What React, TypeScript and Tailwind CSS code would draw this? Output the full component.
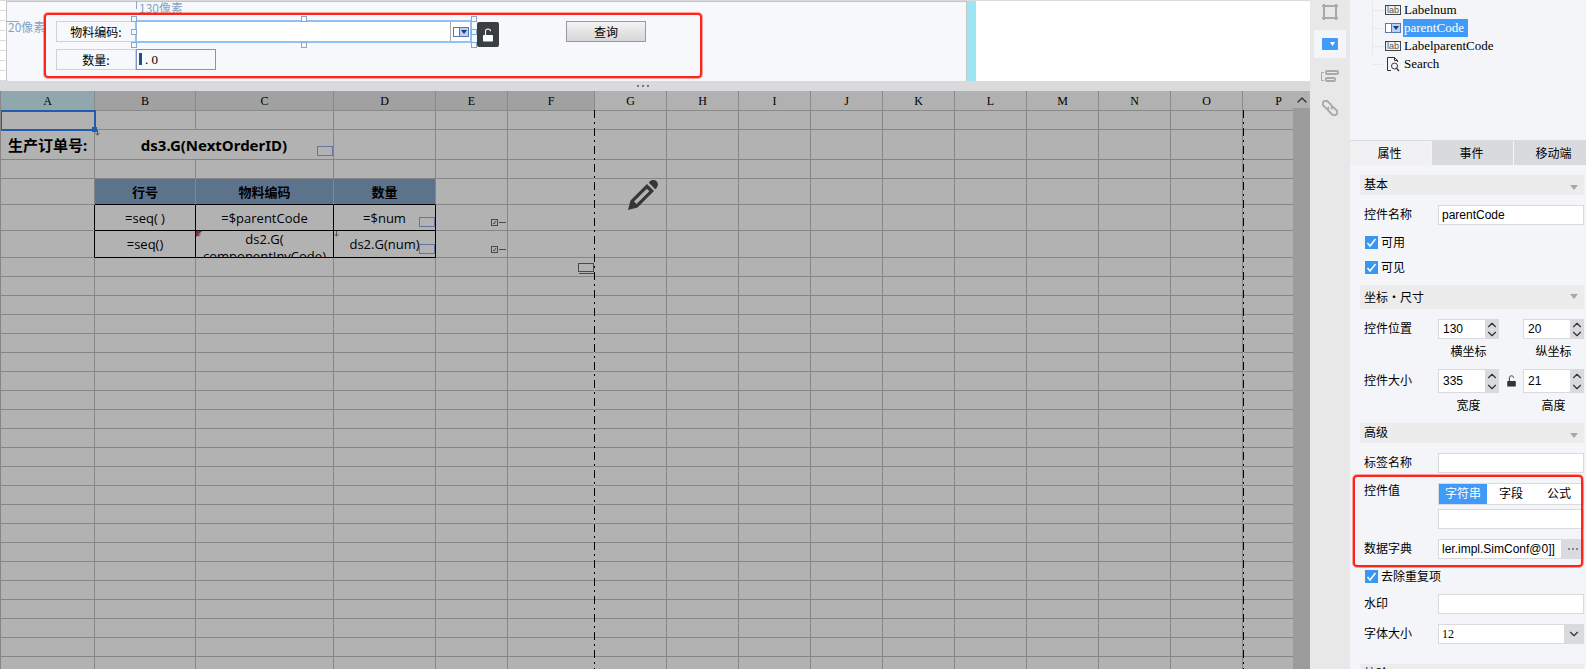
import React from "react";
import { ChevronDown, ChevronUp } from "lucide-react";

const columns = [
  { name: "A", width: 94 },
  { name: "B", width: 101 },
  { name: "C", width: 138 },
  { name: "D", width: 102 },
  { name: "E", width: 72 },
  { name: "F", width: 87 },
  ...["G", "H", "I", "J", "K", "L", "M", "N", "O", "P"].map((name) => ({ name, width: 72 })),
];

const emptyRows = Array.from({ length: 36 }, (_, i) => i);

const line = "border-r border-b border-[#868686]";
const boxed = "border-r border-b border-black relative";
const headCell = "border-r border-b border-r-[#868686] border-b-black bg-[#5d738c]";

const LockIcon = ({ className }: { className: string }) => (
  <svg viewBox="0 0 10 14" className={className} fill="none">
    <path d="M2.5 7V3.5C2.5 1.8 3.5 1 5 1s2.5.8 2.5 2.3" stroke="currentColor" strokeWidth="1.1" />
    <rect x="0" y="7" width="10" height="6.5" rx="0.8" fill="currentColor" />
  </svg>
);

const ComboIcon = () => (
  <svg width="16" height="10" viewBox="0 0 16 10" className="shrink-0">
    <rect x="0.5" y="0.5" width="15" height="9" fill="#fff" stroke="#5a78a8" />
    <rect x="7" y="1" width="8" height="8" fill="#b9d0f2" />
    <path d="M6.5 1v8" stroke="#5a78a8" />
    <path d="M8 3h6L11 7z" fill="#1d3b80" />
  </svg>
);

const LabIcon = () => (
  <svg width="16" height="10" viewBox="0 0 16 10" className="shrink-0">
    <rect x="0.5" y="0.5" width="15" height="9" fill="#f4f4f4" stroke="#444" />
    <text x="8" y="8" fontSize="9" textAnchor="middle" fill="#555" fontFamily="Liberation Sans">
      lab
    </text>
  </svg>
);

const SearchFileIcon = () => (
  <svg width="14" height="15" viewBox="0 0 14 15" fill="none" stroke="#333" className="ml-0.5 shrink-0">
    <path d="M4 13.5H.5V.5h7l3 3V5M7.5.5v3h3" />
    <circle cx="7.5" cy="9" r="3" />
    <path d="M9.5 11.2l2.5 2.8" strokeWidth="1.3" />
  </svg>
);

// marks a cell that has a widget bound to it
const WidgetMark = () => (
  <span className="absolute bottom-[3px] right-0 h-2.5 w-4 border border-[#65759c]" />
);

const ExpandArrow = () => (
  <svg width="5" height="6" viewBox="0 0 5 6" className="absolute left-0 top-0">
    <path d="M2.5 0v5M.3 2.8l2.2 2.4 2.2-2.4" stroke="#555" fill="none" />
  </svg>
);

const CheckMark = () => (
  <svg
    width="16"
    height="8"
    viewBox="0 0 16 8"
    className="absolute bottom-[3px] right-0"
    fill="none"
    stroke="#4a4a4a"
  >
    <rect x="0.5" y="0.5" width="6" height="6" />
    <path d="M2 4l1 1 2-3M8 3.5h7" />
  </svg>
);

const Handle = ({ className }: { className: string }) => (
  <span className={`absolute size-[6px] border border-[#8aa9c8] bg-[#f7f8fb] ${className}`} />
);

const FormDesigner: React.FC = () => (
  <div className="flex h-[81px] shrink-0 overflow-hidden border-t border-[#dadadc] bg-white">
    <div className="w-1.5 shrink-0 bg-[repeating-linear-gradient(to_bottom,#fff_0px,#fff_9px,#dcdcdc_9px,#dcdcdc_10px)]" />
    {/* form body: widgets are placed freely */}
    <div className="relative w-[961px] shrink-0 border border-b-0 border-[#c5c6c8] bg-[#f7f8fb] font-['Noto_Sans_CJK_SC',sans-serif] text-xs">
      <span className="absolute -top-px left-[129px] h-2 w-px bg-[#8aa9c8]" />
      <span className="absolute -top-px left-[132px] leading-[14px] text-[#86a5c5]">130像素</span>
      <span className="absolute left-0 top-[19px] h-px w-3 bg-[#8aa9c8]" />
      <span className="absolute left-[1px] top-[18px] leading-[14px] text-[#86a5c5]">20像素</span>

      <label
        htmlFor="f-code"
        className="absolute left-[49px] top-[19px] flex h-[21px] w-20 items-center justify-center border border-[#d0d1d4]"
      >
        物料编码:
      </label>
      <div className="absolute left-[128px] top-[18px] flex h-[23px] w-[337px] border-2 border-[#8fc1f7] bg-white">
        <input id="f-code" className="min-w-0 flex-1 outline-none" />
        <button aria-label="展开" className="flex w-5 items-center justify-center border-l border-[#aaa]">
          <ComboIcon />
        </button>
      </div>
      <Handle className="left-[124px] top-[14px]" />
      <Handle className="left-[124px] top-[27px]" />
      <Handle className="left-[124px] top-[40px]" />
      <Handle className="left-[294px] top-[14px]" />
      <Handle className="left-[294px] top-[40px]" />
      <Handle className="left-[464px] top-[14px]" />
      <Handle className="left-[464px] top-[27px]" />
      <Handle className="left-[464px] top-[40px]" />
      <button
        aria-label="锁定"
        className="absolute left-[470px] top-[20px] flex h-[25px] w-[22px] items-center justify-center rounded-xs bg-[#3a3f44] text-white"
      >
        <LockIcon className="h-3.5 w-2.5" />
      </button>

      <label
        htmlFor="f-num"
        className="absolute left-[49px] top-[47px] flex h-[21px] w-20 items-center justify-center border border-[#d0d1d4]"
      >
        数量:
      </label>
      <input
        id="f-num"
        defaultValue=". 0"
        className="absolute left-[129px] top-[47px] h-[21px] w-20 border border-[#7f97bb] pl-2 font-['Liberation_Serif',serif] text-[13px] outline-none"
      />
      <span className="absolute left-[132px] top-[51px] h-3 w-[3px] bg-[#1d4f86]" />

      <button className="absolute left-[559px] top-[19px] h-[21px] w-20 border border-[#9a9a9c] bg-linear-to-b from-[#f3f3f3] to-[#d6d6d6] leading-[18px]">
        查询
      </button>

      <div className="absolute left-[37px] top-[11px] h-[65px] w-[658px] rounded-sm border-2 border-[#ff2419] ring-1 ring-[#ff2419]/40" />
    </div>
    <div className="w-[9px] shrink-0 bg-[#9be5f5]" />
  </div>
);

const EmptyCells = ({ from, to = columns.length }: { from: number; to?: number }) => (
  <>
    {columns.slice(from, to).map((c) => (
      <td key={c.name} className={line} />
    ))}
  </>
);

const PageBreak = ({ className }: { className: string }) => (
  <div
    className={`absolute bottom-0 top-[19px] w-px bg-[repeating-linear-gradient(to_bottom,#000_0px,#000_8px,#b2b2b2_8px,#b2b2b2_12px,#000_12px,#000_14px,#b2b2b2_14px,#b2b2b2_18px)] ${className}`}
  />
);

const ReportGrid: React.FC = () => (
  <div className="flex min-h-0 flex-1">
    <div className="relative min-w-0 flex-1 overflow-hidden border-l border-[#868686] bg-[#b2b2b2]">
      <table className="w-[1314px] table-fixed border-separate border-spacing-0 text-center font-['Open_Sans','Noto_Sans_CJK_SC',sans-serif] text-[13px] leading-[18px] text-black [&_td]:p-0">
        <colgroup>
          {columns.map((c) => (
            <col key={c.name} style={{ width: c.width }} />
          ))}
        </colgroup>
        <thead>
          <tr className="h-5 font-['Liberation_Serif',serif] text-xs">
            {columns.map((c, i) => (
              <th
                key={c.name}
                className={`border-r border-b border-[#8a8a8a] p-0 pt-px font-normal ${
                  i === 0 ? "bg-[#91a7ae]" : i < 6 ? "bg-[#a1a1a1]" : "bg-[#b1b1b1]"
                }`}
              >
                {c.name}
              </th>
            ))}
          </tr>
        </thead>
        <tbody>
          <tr className="h-[19px]">
            <td className={`${line} relative`}>
              <div className="absolute -left-px -right-0.5 -top-px -bottom-0.5 border-2 border-[#225cae]" />
              <div className="absolute -bottom-[3px] -right-[3px] size-[5px] bg-[#225cae]" />
            </td>
            <EmptyCells from={1} />
          </tr>
          <tr className="h-[30px] font-['Noto_Sans','Noto_Sans_CJK_SC',sans-serif] text-[15px] font-bold">
            <td className={`${line} whitespace-nowrap`}>生产订单号:</td>
            <td colSpan={2} className={`${line} relative`}>
              <ExpandArrow />
              ds3.G(NextOrderID)
              <WidgetMark />
            </td>
            <EmptyCells from={3} />
          </tr>
          <tr className="h-[19px]">
            <EmptyCells from={0} />
          </tr>
          <tr className="h-[26px] font-bold">
            <td className={line} />
            <td className={headCell}>行号</td>
            <td className={headCell}>物料编码</td>
            <td className={headCell}>数量</td>
            <EmptyCells from={4} />
          </tr>
          <tr className="h-[26px]">
            <td className="border-r border-b border-r-black border-b-[#868686]" />
            <td className={boxed}>=seq( )</td>
            <td className={boxed}>=$parentCode</td>
            <td className={boxed}>
              =$num
              <WidgetMark />
            </td>
            <td className={`${line} relative`}>
              <CheckMark />
            </td>
            <EmptyCells from={5} />
          </tr>
          <tr className="h-[27px]">
            <td className="border-r border-b border-r-black border-b-[#868686]" />
            <td className={boxed}>=seq()</td>
            <td className={boxed}>
              <span className="absolute left-0 top-0 size-[6px] bg-[#c00a2c] [clip-path:polygon(0_0,100%_0,0_100%)]" />
              <ExpandArrow />
              <div className="h-[26px] overflow-hidden leading-[17px]">
                ds2.G(
                <br />
                componentInvCode)
              </div>
            </td>
            <td className={boxed}>
              <ExpandArrow />
              ds2.G(num)
              <WidgetMark />
            </td>
            <td className={`${line} relative`}>
              <CheckMark />
            </td>
            <EmptyCells from={5} />
          </tr>
          <tr className="h-[19px]">
            <EmptyCells from={0} to={5} />
            <td className={`${line} relative`}>
              <span className="absolute right-0 top-[5px] h-[9px] w-4 border border-[#4a4a4a]" />
              <span className="absolute right-0 top-[15px] h-px w-[15px] bg-[#4a4a4a]" />
            </td>
            <EmptyCells from={6} />
          </tr>
          {emptyRows.map((row) => (
            <tr key={row} className="h-[19px]">
              <EmptyCells from={0} />
            </tr>
          ))}
        </tbody>
      </table>
      <PageBreak className="left-[593px]" />
      <PageBreak className="left-[1242px]" />
      <svg
        width="30"
        height="30"
        viewBox="0 0 30 30"
        className="absolute left-[627px] top-[89px]"
        fill="#363636"
      >
        <path d="M20.7 2.6l1.3-1.3a4.5 4.5 0 0 1 6.5 0 4.600 4.600 0 0 1 0 6.600l-1.300 1.300z" />
        <path fillRule="evenodd" d="M19 4l7 7L9.500 27.500 0 30l2.500-9.500zM18.800 8.800L6 21.500l2.500 2.500L21.300 11.300z" />
      </svg>
    </div>
    <div className="w-[17px] shrink-0 bg-[#9b9b9b]">
      <button aria-label="向上滚动" className="flex h-[17px] w-full items-center justify-center bg-[#b1b1b1]">
        <ChevronUp className="size-4 text-[#333]" strokeWidth={2} />
      </button>
    </div>
  </div>
);

const ToolRail: React.FC = () => (
  <nav className="flex w-10 shrink-0 flex-col items-center overflow-hidden bg-[#e8e8e8] text-[#a9a9a9]">
    <div className="-mt-0.5 flex flex-col gap-1">
      <button aria-label="边框" className="flex h-7 w-8 items-center justify-center">
        <svg width="16" height="16" viewBox="0 0 16 16" fill="none" stroke="currentColor" strokeWidth="2">
          <path d="M2 2h12v12H2z" />
          <path d="M0 2h3M2 0v3M13 2h3M14 0v3M0 14h3M2 13v3M13 14h3M14 13v3" />
        </svg>
      </button>
      <button aria-label="控件设置" className="flex h-7 w-8 items-center justify-center bg-[#f4f5f8]">
        <svg width="16" height="12" viewBox="0 0 16 12">
          <rect width="16" height="12" rx="1" fill="#409bf8" />
          <path d="M8 4h5l-2.5 4z" fill="#fff" />
        </svg>
      </button>
      <button aria-label="布局" className="flex h-7 w-8 items-center justify-center">
        <svg width="18" height="13" viewBox="0 0 18 13" fill="none" stroke="currentColor">
          <path d="M3 2.5H.5v8H3" />
          <rect x="5" y="1" width="12" height="3" rx="1" strokeWidth="2" />
          <rect x="5" y="8" width="9" height="3" rx="1" strokeWidth="2" />
        </svg>
      </button>
      <button aria-label="超级链接" className="flex h-7 w-8 items-center justify-center">
        <svg width="16" height="16" viewBox="0 0 16 16" fill="none" stroke="currentColor" strokeWidth="2">
          <g transform="rotate(45 8 8)">
            <path d="M7 11H2a3 3 0 0 1 0-6h4.500a3 3 0 0 1 3 3" />
            <path d="M9 5h5a3 3 0 0 1 0 6H9.500a3 3 0 0 1-3-3" />
          </g>
        </svg>
      </button>
    </div>
  </nav>
);

const treeItems = [
  { name: "Labelnum", icon: <LabIcon />, selected: false },
  { name: "parentCode", icon: <ComboIcon />, selected: true },
  { name: "LabelparentCode", icon: <LabIcon />, selected: false },
  { name: "Search", icon: <SearchFileIcon />, selected: false },
];

const WidgetTree: React.FC = () => (
  <ul className="h-[140px] shrink-0 pl-[22px] pt-px font-['Liberation_Serif',serif] text-[13px] leading-[18px]">
    {treeItems.map((item, i) => (
      <li
        key={item.name}
        className={`flex h-[18px] items-center border-l ${
          i < treeItems.length - 1 ? "border-[#e8e8eb]" : "border-transparent"
        }`}
      >
        <span className="mr-0.5 h-px w-2.5 bg-[#e8e8eb]" />
        <span className="flex w-[18px] shrink-0 items-center">{item.icon}</span>
        <span className={`px-px ${item.selected ? "bg-[#409bf8] pr-1 text-white" : "text-black"}`}>
          {item.name}
        </span>
      </li>
    ))}
  </ul>
);

const Section = ({ title, tall }: { title: string; tall?: boolean }) => (
  <h3
    className={`flex items-center justify-between bg-[#ececed] pl-1 pr-1.5 ${tall ? "h-6 pt-0.5" : "h-5"}`}
  >
    {title}
    <svg width="8" height="5" viewBox="0 0 8 5" className={tall ? "mb-1" : "mt-1"}>
      <path d="M0 0h8L4 5z" fill="#a8a8a8" />
    </svg>
  </h3>
);

const labelClass = "w-[78px] shrink-0 pl-1";
const inputClass = "h-5 w-full min-w-0 border border-[#d9dadd] bg-white px-[3px] outline-none";

const TextField = ({ id, label, value = "" }: { id: string; label: string; value?: string }) => (
  <div className="mt-2.5 flex items-center">
    <label htmlFor={id} className={labelClass}>
      {label}
    </label>
    <input id={id} defaultValue={value} className={inputClass} />
  </div>
);

const CheckField = ({ label }: { label: string }) => (
  <label className="flex h-[25px] items-center gap-[3px] pl-[5px]">
    <span className="relative size-[13px]">
      <input type="checkbox" defaultChecked className="block size-[13px] appearance-none bg-[#3a97f1]" />
      <svg
        viewBox="0 0 13 13"
        className="pointer-events-none absolute inset-0"
        fill="none"
        stroke="#fff"
        strokeWidth="1.5"
      >
        <path d="M2.5 7l2.500 3 5.500-7" />
      </svg>
    </span>
    {label}
  </label>
);

const Spinner = ({ id, label, value, tall }: { id: string; label: string; value: number; tall?: boolean }) => (
  <div className="flex-1">
    <div className={`flex border border-[#d9dadd] bg-white ${tall ? "h-6" : "h-5"}`}>
      <input id={id} defaultValue={value} className="w-0 min-w-0 flex-1 pl-1 outline-none" />
      <div className="flex w-[13px] flex-col bg-[#d9dadd] text-[#333]">
        <button aria-label="增加" className="flex min-h-0 flex-1 items-center justify-center">
          <ChevronUp className="size-3.5 shrink-0" strokeWidth={2} />
        </button>
        <button aria-label="减少" className="flex min-h-0 flex-1 items-center justify-center">
          <ChevronDown className="size-3.5 shrink-0" strokeWidth={2} />
        </button>
      </div>
    </div>
    <label htmlFor={id} className="mt-[3px] flex h-[19px] items-center justify-center">
      {label}
    </label>
  </div>
);

const PropertyPanel: React.FC = () => (
  <aside className="flex w-[236px] shrink-0 flex-col overflow-hidden bg-[#f4f5f8]">
    <WidgetTree />
    <div role="tablist" className="flex h-[25px] shrink-0 gap-px border-t border-[#d9dadd]">
      <button role="tab" aria-selected="true" className="w-[81px] shrink-0 bg-[#f1f1f4] pr-0.5 pt-px">
        属性
      </button>
      <button role="tab" aria-selected="false" className="w-[81px] shrink-0 bg-[#d9dade] pr-0.5 pt-px">
        事件
      </button>
      <button role="tab" aria-selected="false" className="w-[81px] shrink-0 bg-[#d9dade] pr-0.5 pt-px">
        移动端
      </button>
    </div>

    <div className="min-h-0 flex-1 overflow-hidden pl-2.5 pr-0.5 pt-2.5">
      <Section title="基本" />
      <TextField id="p-name" label="控件名称" value="parentCode" />
      <div className="my-[5px]">
        <CheckField label="可用" />
        <CheckField label="可见" />
      </div>

      <Section title="坐标・尺寸" tall />
      <div className="mt-2.5 flex">
        <span className={`${labelClass} leading-5`}>控件位置</span>
        <Spinner id="p-x" label="横坐标" value={130} />
        <span className="w-6 shrink-0" />
        <Spinner id="p-y" label="纵坐标" value={20} />
      </div>
      <div className="mb-2 mt-2 flex">
        <span className={`${labelClass} leading-6`}>控件大小</span>
        <Spinner id="p-w" label="宽度" value={335} tall />
        <span className="flex h-6 w-6 shrink-0 items-center justify-center text-[#333]">
          <LockIcon className="h-3 w-[9px]" />
        </span>
        <Spinner id="p-h" label="高度" value={21} tall />
      </div>

      <Section title="高级" />
      <TextField id="p-label" label="标签名称" />

      <div className="relative mt-2.5">
        <div className="flex items-start">
          <label htmlFor="p-value" className={labelClass}>
            控件值
          </label>
          <div className="min-w-0 flex-1">
            <div className="grid h-[22px] grid-cols-3 border border-[#d9dadd] bg-white">
              <button className="bg-[#409bf8] text-white">字符串</button>
              <button>字段</button>
              <button>公式</button>
            </div>
            <input id="p-value" className={`${inputClass} mt-1 block`} />
          </div>
        </div>
        <div className="mt-2.5 flex items-center">
          <label htmlFor="p-dict" className={labelClass}>
            数据字典
          </label>
          <input id="p-dict" defaultValue="ler.impl.SimConf@0]]" className={inputClass} />
          <button
            aria-label="编辑"
            className="flex h-5 w-[22px] shrink-0 items-center justify-center gap-0.5 bg-[#dadbde]"
          >
            <i className="size-0.5 bg-[#888]" />
            <i className="size-0.5 bg-[#888]" />
            <i className="size-0.5 bg-[#888]" />
          </button>
        </div>
        <div className="pointer-events-none absolute -left-[7px] -top-2 -bottom-2 right-px rounded-sm border-2 border-[#ff2419] ring-1 ring-[#ff2419]/40" />
      </div>

      <div className="my-[5px]">
        <CheckField label="去除重复项" />
      </div>
      <div className="flex items-center">
        <label htmlFor="p-mark" className={labelClass}>
          水印
        </label>
        <input id="p-mark" className={inputClass} />
      </div>
      <div className="mb-5 mt-2.5 flex items-center">
        <label htmlFor="p-size" className={labelClass}>
          字体大小
        </label>
        <div className="relative flex-1">
          <select
            id="p-size"
            className="block h-5 w-full appearance-none border border-[#d9dadd] bg-white pl-[3px] font-['Liberation_Serif',serif] text-xs"
          >
            <option>12</option>
          </select>
          <span className="pointer-events-none absolute right-0 top-0 flex h-5 w-5 items-center justify-center bg-[#d9dadd]">
            <ChevronDown className="size-3.5 text-[#333]" />
          </span>
        </div>
      </div>
      <Section title="校验" />
    </div>
  </aside>
);

const App: React.FC = () => {
  return (
    <div className="flex h-screen overflow-hidden bg-white font-['Liberation_Sans','Noto_Sans_CJK_SC',sans-serif] text-xs text-black">
      <main className="flex min-w-0 flex-1 flex-col">
        <FormDesigner />
        <div className="flex h-2.5 shrink-0 items-center justify-center gap-[3px] bg-[#dadadc] pr-6">
          <i className="size-0.5 bg-[#777]" />
          <i className="size-0.5 bg-[#777]" />
          <i className="size-0.5 bg-[#777]" />
        </div>
        <ReportGrid />
      </main>
      <ToolRail />
      <PropertyPanel />
    </div>
  );
};

export default App;
